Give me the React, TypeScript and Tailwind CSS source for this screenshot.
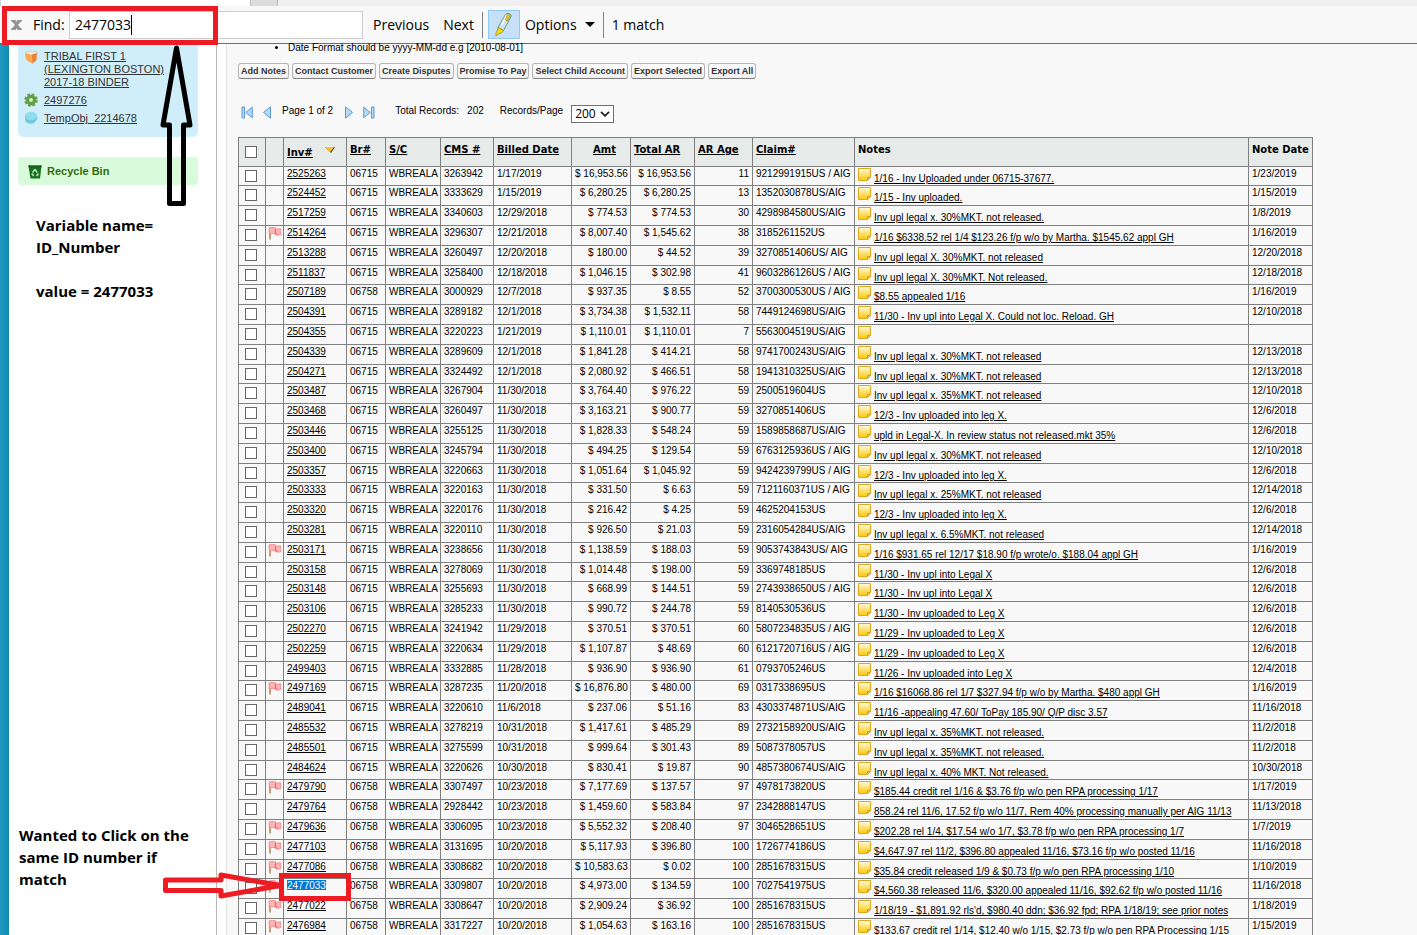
import React from "react";

type Row = {
  inv: string;
  br: string;
  cms: string;
  billed: string;
  amt: string;
  total: string;
  age: string;
  claim: string;
  note: string;
  noteDate: string;
  flag?: boolean;
};

const source = `2525263|06715|3263942|1/17/2019|16,953.56|16,953.56|11|9212991915US / AIG|1/16 - Inv Uploaded under 06715-37677.|1/23/2019
2524452|06715|3333629|1/15/2019|6,280.25|6,280.25|13|1352030878US/AIG|1/15 - Inv uploaded.|1/15/2019
2517259|06715|3340603|12/29/2018|774.53|774.53|30|4298984580US/AIG|Inv upl legal x. 30%MKT. not released.|1/8/2019
2514264|06715|3296307|12/21/2018|8,007.40|1,545.62|38|3185261152US|1/16 $6338.52 rel 1/4 $123.26 f/p w/o by Martha. $1545.62 appl GH|1/16/2019|F
2513288|06715|3260497|12/20/2018|180.00|44.52|39|3270851406US/ AIG|Inv upl legal X. 30%MKT. not released|12/20/2018
2511837|06715|3258400|12/18/2018|1,046.15|302.98|41|9603286126US / AIG|Inv upl legal X. 30%MKT. Not released.|12/18/2018
2507189|06758|3000929|12/7/2018|937.35|8.55|52|3700300530US / AIG|$8.55 appealed 1/16|1/16/2019
2504391|06715|3289182|12/1/2018|3,734.38|1,532.11|58|7449124698US/AIG|11/30 - Inv upl into Legal X. Could not loc. Reload. GH|12/10/2018
2504355|06715|3220223|1/21/2019|1,110.01|1,110.01|7|5563004519US/AIG||
2504339|06715|3289609|12/1/2018|1,841.28|414.21|58|9741700243US/AIG|Inv upl legal x. 30%MKT. not released|12/13/2018
2504271|06715|3324492|12/1/2018|2,080.92|466.51|58|1941310325US/AIG|Inv upl legal x. 30%MKT. not released|12/13/2018
2503487|06715|3267904|11/30/2018|3,764.40|976.22|59|2500519604US|Inv upl legal x. 35%MKT. not released|12/10/2018
2503468|06715|3260497|11/30/2018|3,163.21|900.77|59|3270851406US|12/3 - Inv uploaded into leg X.|12/6/2018
2503446|06715|3255125|11/30/2018|1,828.33|548.24|59|1589858687US/AIG|upld in Legal-X. In review status not released.mkt 35%|12/6/2018
2503400|06715|3245794|11/30/2018|494.25|129.54|59|6763125936US / AIG|Inv upl legal x. 30%MKT. not released|12/10/2018
2503357|06715|3220663|11/30/2018|1,051.64|1,045.92|59|9424239799US / AIG|12/3 - Inv uploaded into leg X.|12/6/2018
2503333|06715|3220163|11/30/2018|331.50|6.63|59|7121160371US / AIG|Inv upl legal x. 25%MKT. not released|12/14/2018
2503320|06715|3220176|11/30/2018|216.42|4.25|59|4625204153US|12/3 - Inv uploaded into leg X.|12/6/2018
2503281|06715|3220110|11/30/2018|926.50|21.03|59|2316054284US/AIG|Inv upl legal x. 6.5%MKT. not released|12/14/2018
2503171|06715|3238656|11/30/2018|1,138.59|188.03|59|9053743843US/ AIG|1/16 $931.65 rel 12/17 $18.90 f/p wrote/o. $188.04 appl GH|1/16/2019|F
2503158|06715|3278069|11/30/2018|1,014.48|198.00|59|3369748185US|11/30 - Inv upl into Legal X|12/6/2018
2503148|06715|3255693|11/30/2018|668.99|144.51|59|2743938650US / AIG|11/30 - Inv upl into Legal X|12/6/2018
2503106|06715|3285233|11/30/2018|990.72|244.78|59|8140530536US|11/30 - Inv uploaded to Leg X|12/6/2018
2502270|06715|3241942|11/29/2018|370.51|370.51|60|5807234835US / AIG|11/29 - Inv uploaded to Leg X|12/6/2018
2502259|06715|3220634|11/29/2018|1,107.87|48.69|60|6121720716US / AIG|11/29 - Inv uploaded to Leg X|12/6/2018
2499403|06715|3332885|11/28/2018|936.90|936.90|61|0793705246US|11/26 - Inv uploaded into Leg X|12/4/2018
2497169|06715|3287235|11/20/2018|16,876.80|480.00|69|0317338695US|1/16 $16068.86 rel 1/7 $327.94 f/p w/o by Martha. $480 appl GH|1/16/2019|F
2489041|06715|3220610|11/6/2018|237.06|51.16|83|4303374871US/AIG|11/16 -appealing 47.60/ ToPay 185.90/ Q/P disc 3.57|11/16/2018
2485532|06715|3278219|10/31/2018|1,417.61|485.29|89|2732158920US/AIG|Inv upl legal x. 35%MKT. not released.|11/2/2018
2485501|06715|3275599|10/31/2018|999.64|301.43|89|5087378057US|Inv upl legal x. 35%MKT. not released.|11/2/2018
2484624|06715|3220626|10/30/2018|830.41|19.87|90|4857380674US/AIG|Inv upl legal x. 40% MKT. Not released.|10/30/2018
2479790|06758|3307497|10/23/2018|7,177.69|137.57|97|4978173820US|$185.44 credit rel 1/16 & $3.76 f/p w/o pen RPA processing 1/17|1/17/2019|F
2479764|06758|2928442|10/23/2018|1,459.60|583.84|97|2342888147US|858.24 rel 11/6, 17.52 f/p w/o 11/7, Rem 40% processing manually per AIG 11/13|11/13/2018
2479636|06758|3306095|10/23/2018|5,552.32|208.40|97|3046528651US|$202.28 rel 1/4, $17.54 w/o 1/7, $3.78 f/p w/o pen RPA processing 1/7|1/7/2019|F
2477103|06758|3131695|10/20/2018|5,117.93|396.80|100|1726774186US|$4,647.97 rel 11/2, $396.80 appealed 11/16, $73.16 f/p w/o posted 11/16|11/16/2018|F
2477086|06758|3308682|10/20/2018|10,583.63|0.02|100|2851678315US|$35.84 credit released 1/9 & $0.73 f/p w/o pen RPA processing 1/10|1/10/2019|F
2477033|06758|3309807|10/20/2018|4,973.00|134.59|100|7027541975US|$4,560.38 released 11/6, $320.00 appealed 11/16, $92.62 f/p w/o posted 11/16|11/16/2018|F
2477022|06758|3308647|10/20/2018|2,909.24|36.92|100|2851678315US|1/18/19 - $1,891.92 rls'd, $980.40 ddn; $36.92 fpd; RPA 1/18/19; see prior notes|1/18/2019|F
2476984|06758|3317227|10/20/2018|1,054.63|163.16|100|2851678315US|$133.67 credit rel 1/14, $12.40 w/o 1/15, $2.73 f/p w/o pen RPA Processing 1/15|1/15/2019|F`;

const rows: Row[] = source.split("\n").map((line) => {
  const [inv, br, cms, billed, amt, total, age, claim, note, noteDate, flag] = line.split("|");
  return { inv, br, cms, billed, amt, total, age, claim, note, noteDate, flag: flag === "F" };
});

const match = "2477033";

const cell = "border-r border-b border-[#808080] px-[3px] py-0 align-top whitespace-nowrap";
const head = "border-r border-b border-[#808080] bg-[#e6eae9] px-[3px] py-0 text-left align-top font-bold whitespace-nowrap";
const headText = "mt-[5px] block leading-[14px]";
const box = "m-0 block size-3 appearance-none border border-[#666] bg-white checked:bg-[#0078d7]";

function NoteIcon() {
  return (
    <svg className="mt-px size-[13px] shrink-0" viewBox="0 0 13 13" aria-hidden="true">
      <defs>
        <linearGradient id="noteFill" x1="0" y1="0" x2="0" y2="1">
          <stop offset="0" stopColor="#fffbe0" />
          <stop offset="1" stopColor="#fbc704" />
        </linearGradient>
      </defs>
      <path d="M.5.5h12v9l-3 3H.5z" fill="url(#noteFill)" stroke="#dba820" />
      <path d="M12 9.500H9.500V12z" fill="#fff6c4" stroke="#c98f0c" strokeWidth=".8" />
    </svg>
  );
}

function FlagIcon() {
  return (
    <svg className="mt-px ml-[2px] block h-[13px] w-[14px]" viewBox="0 0 14 13" aria-hidden="true">
      <path d="M2 1v11.500" stroke="#c4a078" strokeWidth="2" />
      <path d="M1.200.8c1.800-.5 3.800-.4 6.300 0v1.400l5.300-.4-.4 2.700.5 3c-1.700.7-4 .9-5.200.2l-.4-1.200c-2 .1-4-.2-6.100.4z" fill="#ffb3b3" stroke="#f58080" strokeWidth=".8" />
      <path d="M7.400 2.300v4.200l2 1" stroke="#ee5a5a" strokeWidth="1" fill="none" />
    </svg>
  );
}

function PagerIcon({ back, end }: { back?: boolean; end?: boolean }) {
  return (
    <svg className="mb-[3px] h-[13px] w-3" viewBox="0 0 12 13" aria-hidden="true">
      <g transform={back ? "translate(12 0) scale(-1 1)" : undefined} fill="#b4daf9" stroke="#5a9ada" strokeWidth="1">
        <path d={end ? "M.7 1.200 7.200 6.500.7 11.800z" : "M2.500.8 9.500 6.500 2.500 12.200z"} />
        {end && <path d="M8.500 1h2.500v11H8.500z" />}
      </g>
    </svg>
  );
}

function FindBar() {
  return (
    <header className="flex h-[38px] shrink-0 items-center border-b border-[#6d6d6d] bg-[#f8f8f8] font-['Open_Sans','Noto_Sans',sans-serif] text-[14px] text-black">
      <button aria-label="Close find bar" className="ml-[10px] flex h-5 w-[13px] items-center justify-center">
        <svg className="h-3 w-[13px]" viewBox="0 0 13 12" aria-hidden="true">
          <path d="M1 1h4.500l1 2 1-2H12v1.500h-1L8 6l3 3.500h1V11H7.500l-1-2-1 2H1V9.500h1L5 6 2 2.500H1z" fill="#929292" />
        </svg>
      </button>
      <label htmlFor="find" className="ml-[10px] w-9">Find:</label>
      <div className="relative flex h-7 w-[294px]">
        <input id="find" defaultValue={match} className="w-full border border-[#ccc] bg-white px-[5px] outline-none" />
        <span className="absolute top-1 left-[62px] h-5 w-px bg-black" />
      </div>
      <button className="ml-[10px]">Previous</button>
      <button className="ml-[14px]">Next</button>
      <span className="ml-2 h-[26px] w-px bg-[#808080]" />
      <button aria-label="Highlight matches" aria-pressed="true" className="ml-[5px] flex h-[29px] w-8 items-center justify-center border border-[#90c8f6] bg-[#c5e0f7]">
        <svg className="h-[25px] w-[18px]" viewBox="0 0 18 25" aria-hidden="true">
          <path d="M10.500 2.500c1-2 5.500-1 5.800 1.500L8.500 18.500 3 15.500z" fill="#d3e4e6" stroke="#6d8f96" />
          <path d="M11.500 3l-5 10" stroke="#fff" strokeWidth="1.500" />
          <path d="M12.500 1.500l3 1.500-3 6-2-1z" fill="#e3d51c" stroke="#8d8a22" strokeWidth=".7" />
          <path d="M3 15.500l5.500 3-2 2.500-3.500 1-2 2.200-.2-2.700 1.400-3z" fill="#f3dc11" stroke="#a18f1a" strokeWidth=".8" />
        </svg>
      </button>
      <button className="ml-[5px] flex items-center gap-2">
        Options
        <svg className="h-[5px] w-[10px]" viewBox="0 0 10 5" aria-hidden="true"><path d="M0 0h10L5 5z" /></svg>
      </button>
      <span className="ml-2 h-[26px] w-px bg-[#808080]" />
      <output htmlFor="find" className="ml-2">1 match</output>
    </header>
  );
}

function Sidebar() {
  return (
    <aside className="flex w-[217px] shrink-0 border-r border-[#b8b8b8] bg-white">
      <div className="w-[9px] shrink-0 bg-linear-to-r from-[#1c9ac4] to-[#168cb4]" />
      <div className="flex flex-1 flex-col pl-[9px] font-['Liberation_Sans',Arial,sans-serif] text-[11px] text-[#333]">
        <nav className="flex h-[93px] w-[180px] flex-col rounded-b-[5px] bg-[#d0eef9] pt-[6px] pl-[6px]">
          <div className="flex gap-[6px]">
            <svg className="size-[14px] shrink-0" viewBox="0 0 14 14" aria-hidden="true">
              <path d="M1.500 2.500L6 1l1.500 1L12.500 1l.8 1-1 8.500L8.500 13.500l-6-3.500z" fill="#f0f0e8" stroke="#d9b48c" strokeWidth=".6" />
              <path d="M1 3l6.500 1.800 1 8.700-6-3.500z" fill="#f7a94f" />
              <path d="M7.500 4.800l5.500-2-1 7.700-3.500 3z" fill="#ee8136" />
            </svg>
            <a href="#binder" className="w-[125px] leading-[13px] underline">
              TRIBAL FIRST 1<br />(LEXINGTON BOSTON)<br />2017-18 BINDER
            </a>
          </div>
          <div className="mt-[4px] flex items-center gap-[6px]">
            <svg className="size-[14px] shrink-0" viewBox="0 0 14 14" aria-hidden="true">
              <circle cx="7" cy="7" r="5.500" fill="none" stroke="#6fa653" strokeWidth="2.600" strokeDasharray="2.700 1.620" />
              <circle cx="7" cy="7" r="3.700" fill="#8cc065" stroke="#5f9f48" strokeWidth="3" />
              <circle cx="7" cy="7" r="1.700" fill="#dff1d6" />
            </svg>
            <a href="#2497276" className="leading-[14px] underline">2497276</a>
          </div>
          <div className="mt-1 flex items-center gap-[6px]">
            <svg className="size-[14px] shrink-0" viewBox="0 0 14 14" aria-hidden="true">
              <path d="M.8 5L2 11l3 2.200h5L13.200 9V5z" fill="#b5e3ee" />
              <path d="M.8 5l.8 5.500L5 12.500l4.500-.5L13.200 8V5z" fill="#6cc6dc" />
              <ellipse cx="7" cy="5" rx="6.200" ry="4.200" fill="#8edcec" />
            </svg>
            <a href="#2214678" className="leading-[14px] underline">TempObj_2214678</a>
          </div>
        </nav>
        <a href="#recycle" className="mt-5 flex h-7 w-[180px] items-center gap-[5px] rounded-[4px] bg-[#dafbdb] pt-px pl-[10px] font-bold text-[#2f6b0c]">
          <svg className="h-[15px] w-[14px]" viewBox="0 0 14 15" aria-hidden="true">
            <path d="M.5 2h13L12 14.500H2.500z" fill="#16701c" />
            <path d="M.5 1.200h13v2H.5z" fill="#0e4a12" />
            <path d="M2 1.800h10" stroke="#55a455" strokeWidth=".8" />
            <path d="M7 5.500l2.200 3M10.500 9.500L8.500 12M5.800 12L3.800 9.500M4.500 8.500L7 5.500" stroke="#b8e6b5" strokeWidth="1.500" fill="none" />
          </svg>
          Recycle Bin
        </a>
        <div className="mt-[29px] pl-[18px] font-['Open_Sans','Noto_Sans',sans-serif] text-[15px] leading-[22px] font-bold text-black">
          <p>Variable name=<br />ID_Number</p>
          <p className="mt-[22px]">value = 2477033</p>
        </div>
        <p className="mt-[522px] w-[195px] pl-px font-['Open_Sans','Noto_Sans',sans-serif] text-[15px] leading-[22px] font-bold text-black">
          Wanted to Click on the<br />same ID number if<br />match
        </p>
      </div>
    </aside>
  );
}

function Invoices() {
  return (
    <table className="w-full table-fixed border-separate border-spacing-0 border-t border-l border-[#808080]">
      <colgroup>
        <col className="w-[27px]" />
        <col className="w-[18px]" />
        <col className="w-[63px]" />
        <col className="w-[39px]" />
        <col className="w-[55px]" />
        <col className="w-[53px]" />
        <col className="w-[78px]" />
        <col className="w-[59px]" />
        <col className="w-[64px]" />
        <col className="w-[58px]" />
        <col className="w-[102px]" />
        <col />
        <col className="w-[64px]" />
      </colgroup>
      <thead className="font-['DejaVu_Sans',Verdana,sans-serif]">
        <tr className="h-[29px]">
          <th className={head}><input type="checkbox" aria-label="Select all" className={box + " mt-2 ml-[3px]"} /></th>
          <th className={head} aria-label="Flag" />
          <th className={head}>
            <span className="mt-2 flex items-start gap-3 leading-[14px]">
              <a href="#inv" className="underline">Inv#</a>
              <svg className="mt-px h-[6px] w-[10px]" viewBox="0 0 10 6" aria-hidden="true">
                <path d="M0 0h10L6 6z" fill="#4a4a3a" />
                <path d="M0 0h9L5 5z" fill="#ffc61a" />
              </svg>
            </span>
          </th>
          <th className={head}><a href="#br" className={headText + " underline"}>Br#</a></th>
          <th className={head}><a href="#sc" className={headText + " underline"}>S/C</a></th>
          <th className={head}><a href="#cms" className={headText + " underline"}>CMS #</a></th>
          <th className={head}><a href="#billed" className={headText + " underline"}>Billed Date</a></th>
          <th className={head}><a href="#amt" className={headText + " pr-[11px] text-right underline"}>Amt</a></th>
          <th className={head}><a href="#total" className={headText + " underline"}>Total AR</a></th>
          <th className={head}><a href="#age" className={headText + " underline"}>AR Age</a></th>
          <th className={head}><a href="#claim" className={headText + " underline"}>Claim#</a></th>
          <th className={head}><span className={headText}>Notes</span></th>
          <th className={head}><span className={headText}>Note Date</span></th>
        </tr>
      </thead>
      <tbody className="leading-[13px]">
        {rows.map((r) => (
          <tr key={r.inv} className="h-5 nth-[5n+1]:h-[19px]">
            <td className={cell}><input type="checkbox" aria-label={"Select " + r.inv} className={box + " mt-[3px] ml-[3px]"} /></td>
            <td className="border-r border-b border-[#808080] p-0 align-top">{r.flag && <FlagIcon />}</td>
            <td className={cell}>
              <a href={"#" + r.inv} className={r.inv === match ? "bg-[#0078d7] text-white underline" : "underline"}>{r.inv}</a>
            </td>
            <td className={cell}>{r.br}</td>
            <td className={cell}>WBREALA</td>
            <td className={cell}>{r.cms}</td>
            <td className={cell}>{r.billed}</td>
            <td className={cell + " text-right"}>$ {r.amt}</td>
            <td className={cell + " text-right"}>$ {r.total}</td>
            <td className={cell + " text-right"}>{r.age}</td>
            <td className={cell}>{r.claim}</td>
            <td className={cell}>
              <div className="flex h-[18px] gap-[3px]">
                <NoteIcon />
                <a href={"#note-" + r.inv} className="mt-[5px] underline">{r.note}</a>
              </div>
            </td>
            <td className={cell}>{r.noteDate}</td>
          </tr>
        ))}
      </tbody>
    </table>
  );
}

const actions = ["Add Notes", "Contact Customer", "Create Disputes", "Promise To Pay", "Select Child Account", "Export Selected", "Export All"];

export default function App() {
  return (
    <div className="relative flex h-screen flex-col overflow-hidden bg-[#f8f8f8] text-black">
      <div className="flex h-[6px] shrink-0 bg-[#efefef]">
        <div className="w-[250px] border-l border-[#ccc] bg-white" />
        <div className="w-7 border-x border-[#bbb] bg-[#dcdcdc]" />
      </div>
      <FindBar />
      <div className="flex min-h-0 flex-1">
        <Sidebar />
        <main className="flex min-w-0 flex-1">
          <div className="w-[10px] shrink-0 border-r border-[#e4e4e4] bg-white" />
          <div className="min-w-0 flex-1 pr-[104px] pl-[11px] font-['Liberation_Sans',Arial,sans-serif] text-[10px]">
            <ul className="h-[10px] list-disc pl-[50px] leading-[8px]">
              <li>Date Format should be yyyy-MM-dd e.g [2010-08-01]</li>
            </ul>
            <div className="mt-[9px] flex gap-[3px]">
              {actions.map((a) => (
                <button key={a} className="h-4 rounded-[3px] border border-[#b5b5b5] border-b-[#7f7f7f] bg-linear-to-b from-white to-[#f0f0f0] px-[2px] text-[9px] leading-[14px] font-bold whitespace-nowrap text-[#333]">
                  {a}
                </button>
              ))}
            </div>
            <div className="mt-[25px] flex h-5 items-center">
              <button aria-label="First page" className="ml-[3px]"><PagerIcon back end /></button>
              <button aria-label="Previous page" className="ml-2"><PagerIcon back /></button>
              <span className="mb-[7px] ml-[9px]">Page 1 of 2</span>
              <button aria-label="Next page" className="ml-[10px]"><PagerIcon /></button>
              <button aria-label="Last page" className="ml-2"><PagerIcon end /></button>
              <span className="mb-[7px] ml-5">Total Records:</span>
              <span className="mb-[7px] ml-2">202</span>
              <label htmlFor="perPage" className="mb-[7px] ml-4">Records/Page</label>
              <span className="relative ml-2 flex items-center">
                <select id="perPage" defaultValue="200" className="h-[18px] w-[43px] appearance-none border border-[#707070] bg-white pl-[3px] font-['Open_Sans','Noto_Sans',sans-serif] text-[12px] leading-4">
                  <option>100</option>
                  <option>200</option>
                </select>
                <svg className="pointer-events-none absolute right-1 h-[6px] w-[10px]" viewBox="0 0 10 6" aria-hidden="true">
                  <path d="M1 .8l4 4 4-4" fill="none" stroke="#222" strokeWidth="1.800" />
                </svg>
              </span>
            </div>
            <div className="mt-[13px]">
              <Invoices />
            </div>
          </div>
        </main>
      </div>

      <div className="pointer-events-none absolute top-[6px] left-[2px] h-[39px] w-[216px] border-[5px] border-[#ed1c24]" />
      <div className="pointer-events-none absolute top-[873px] left-[279px] h-7 w-[72px] border-[5px] border-[#ed1c24]" />
      <svg className="pointer-events-none absolute top-[44px] left-[158px] h-[164px] w-[38px]" viewBox="0 0 38 164" aria-hidden="true">
        <path d="M18.500 4L5 81h6.500v78.500h14V81H32z" fill="none" stroke="#000" strokeWidth="5" strokeLinejoin="round" />
      </svg>
      <svg className="pointer-events-none absolute top-[868px] left-[160px] h-9 w-[124px]" viewBox="0 0 124 36" aria-hidden="true">
        <path d="M5.500 12H61V7l59 10.500L61 28v-5.500H5.500z" fill="none" stroke="#ed1c24" strokeWidth="5" strokeLinejoin="round" />
      </svg>
    </div>
  );
}
